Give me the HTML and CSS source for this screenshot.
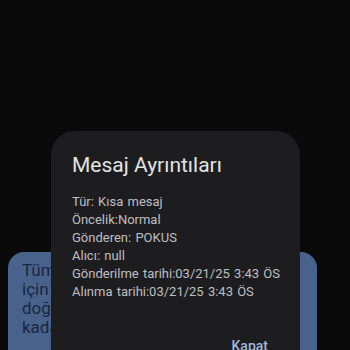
FILE: index.html
```html
<!DOCTYPE html>
<html lang="tr">
<head>
<meta charset="utf-8">
<link rel="stylesheet" href="styles.css">
</head>
<body>
<div class="screen">
  <div class="bubble">
    <div class="bubble-line">Tüm müşterilerimize özel</div>
    <div class="bubble-line">için hemen başvurun</div>
    <div class="bubble-line">doğrudan kaçırmayın</div>
    <div class="bubble-line">kadar geçerlidir.</div>
  </div>
  <div class="dialog">
    <h1 class="title">Mesaj Ayrıntıları</h1>
    <div class="details">
      <div class="row">Tür: Kısa mesaj</div>
      <div class="row">Öncelik:Normal</div>
      <div class="row">Gönderen: POKUS</div>
      <div class="row">Alıcı: null</div>
      <div class="row">Gönderilme tarihi:03/21/25 3:43 ÖS</div>
      <div class="row">Alınma tarihi:03/21/25 3:43 ÖS</div>
    </div>
    <div class="actions"><span class="btn">Kapat</span></div>
  </div>
</div>
</body>
</html>
```
FILE: styles.css
```css
html, body {
  margin: 0;
  padding: 0;
  background: #0a0a0a;
  width: 350px;
  height: 350px;
  overflow: hidden;
  font-family: Roboto, "Noto Sans", sans-serif;
}
.screen {
  position: relative;
  width: 350px;
  height: 350px;
  overflow: hidden;
}
.bubble {
  margin: 252px 0 0 8px;
  width: 309px;
  height: 140px;
  box-sizing: border-box;
  background: #48628c;
  border-radius: 16px 16px 0 0;
  padding: 9px 14px 0 14px;
}
.bubble-line {
  color: #1a2740;
  font-size: 17px;
  line-height: 19px;
  white-space: nowrap;
}
.dialog {
  position: absolute;
  left: 51px;
  top: 131px;
  width: 249px;
  height: 260px;
  box-sizing: border-box;
  background: #1d1d1f;
  border-radius: 24px;
  padding: 20px 21px 0 21px;
}
.title {
  margin: 0;
  font-weight: 400;
  font-size: 21px;
  line-height: 28px;
  color: #e3e3e3;
}
.details {
  margin-top: 14px;
  color: #bfbfc1;
  font-size: 13px;
  line-height: 18px;
  word-spacing: 1px;
}
.row {
  white-space: nowrap;
}
.actions {
  display: flex;
  justify-content: flex-end;
  margin-top: 35px;
  padding-right: 11px;
}
.btn {
  color: #a0b6dc;
  font-size: 14px;
  font-weight: 500;
  line-height: 20px;
}
```
